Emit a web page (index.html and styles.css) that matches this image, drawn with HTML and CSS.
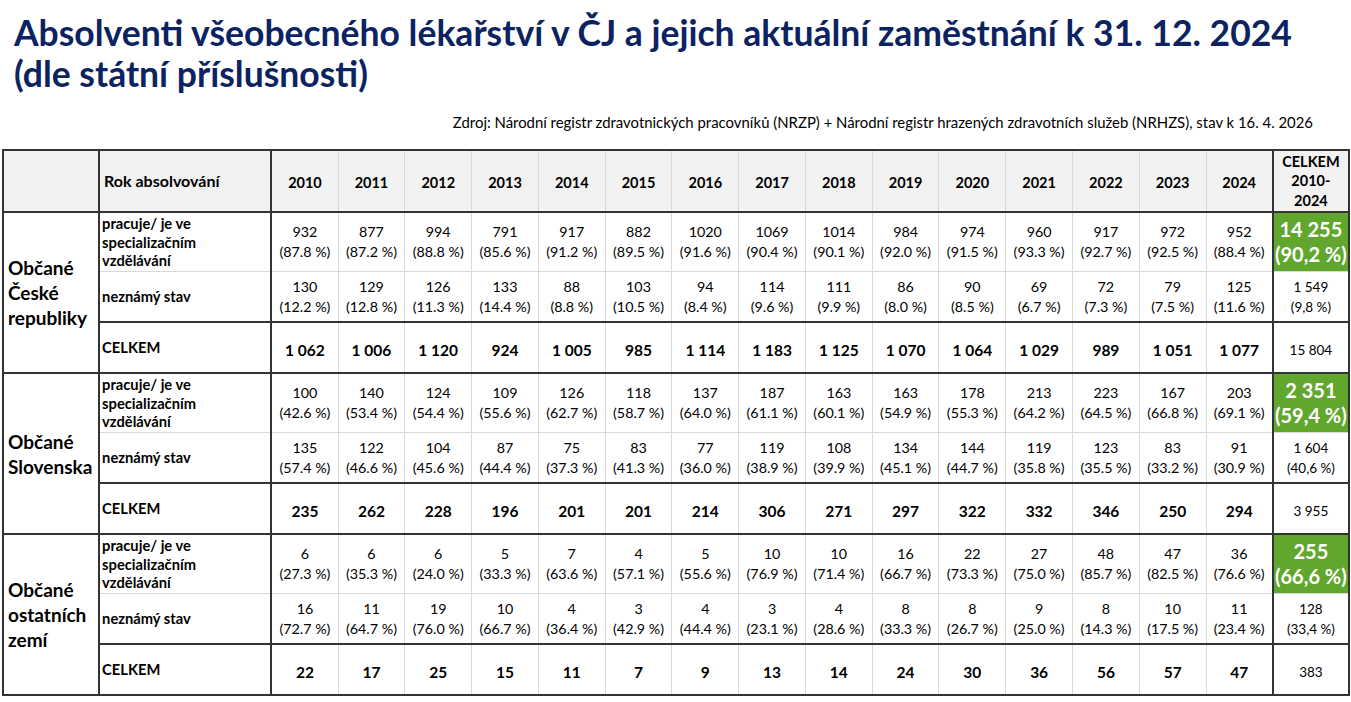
FILE: index.html
```html
<!DOCTYPE html>
<html lang="cs">
<head>
<meta charset="utf-8">
<title>Absolventi všeobecného lékařství</title>
<link rel="stylesheet" href="styles.css">
</head>
<body>
<h1 class="title">Absolventi všeobecného lékařství v ČJ a jejich aktuální zaměstnání k 31. 12. 2024<br>(dle státní příslušnosti)</h1>
<p class="source">Zdroj: Národní registr zdravotnických pracovníků (NRZP) + Národní registr hrazených zdravotních služeb (NRHZS), stav k 16. 4. 2026</p>
<table class="grid">
<colgroup>
<col class="c-grp"><col class="c-lab">
<col class="c-yr"><col class="c-yr"><col class="c-yr"><col class="c-yr"><col class="c-yr">
<col class="c-yr"><col class="c-yr"><col class="c-yr"><col class="c-yr"><col class="c-yr">
<col class="c-yr"><col class="c-yr"><col class="c-yr"><col class="c-yr"><col class="c-yr">
<col class="c-tot">
</colgroup>
<thead>
<tr class="hdr">
<th class="grp"></th><th class="lab">Rok absolvování</th>
<th>2010</th><th>2011</th><th>2012</th><th>2013</th><th>2014</th><th>2015</th><th>2016</th><th>2017</th><th>2018</th><th>2019</th><th>2020</th><th>2021</th><th>2022</th><th>2023</th><th>2024</th>
<th class="tot">CELKEM<br>2010-<br>2024</th>
</tr>
</thead>
<tbody>
<tr class="work">
<th class="grp" rowspan="3">Občané<br>České<br>republiky</th>
<th class="lab">pracuje/ je ve<br>specializačním<br>vzdělávání</th>
<td>932<br>(87.8 %)</td><td>877<br>(87.2 %)</td><td>994<br>(88.8 %)</td><td>791<br>(85.6 %)</td><td>917<br>(91.2 %)</td><td>882<br>(89.5 %)</td><td>1020<br>(91.6 %)</td><td>1069<br>(90.4 %)</td><td>1014<br>(90.1 %)</td><td>984<br>(92.0 %)</td><td>974<br>(91.5 %)</td><td>960<br>(93.3 %)</td><td>917<br>(92.7 %)</td><td>972<br>(92.5 %)</td><td>952<br>(88.4 %)</td>
<td class="tot green">14&nbsp;255<br>(90,2&nbsp;%)</td>
</tr>
<tr class="unk">
<th class="lab">neznámý stav</th>
<td>130<br>(12.2 %)</td><td>129<br>(12.8 %)</td><td>126<br>(11.3 %)</td><td>133<br>(14.4 %)</td><td>88<br>(8.8 %)</td><td>103<br>(10.5 %)</td><td>94<br>(8.4 %)</td><td>114<br>(9.6 %)</td><td>111<br>(9.9 %)</td><td>86<br>(8.0 %)</td><td>90<br>(8.5 %)</td><td>69<br>(6.7 %)</td><td>72<br>(7.3 %)</td><td>79<br>(7.5 %)</td><td>125<br>(11.6 %)</td>
<td class="tot small">1&nbsp;549<br>(9,8&nbsp;%)</td>
</tr>
<tr class="sum">
<th class="lab">CELKEM</th>
<td>1&nbsp;062</td><td>1&nbsp;006</td><td>1&nbsp;120</td><td>924</td><td>1&nbsp;005</td><td>985</td><td>1&nbsp;114</td><td>1&nbsp;183</td><td>1&nbsp;125</td><td>1&nbsp;070</td><td>1&nbsp;064</td><td>1&nbsp;029</td><td>989</td><td>1&nbsp;051</td><td>1&nbsp;077</td>
<td class="tot small">15&nbsp;804</td>
</tr>

<tr class="work">
<th class="grp" rowspan="3">Občané<br>Slovenska</th>
<th class="lab">pracuje/ je ve<br>specializačním<br>vzdělávání</th>
<td>100<br>(42.6 %)</td><td>140<br>(53.4 %)</td><td>124<br>(54.4 %)</td><td>109<br>(55.6 %)</td><td>126<br>(62.7 %)</td><td>118<br>(58.7 %)</td><td>137<br>(64.0 %)</td><td>187<br>(61.1 %)</td><td>163<br>(60.1 %)</td><td>163<br>(54.9 %)</td><td>178<br>(55.3 %)</td><td>213<br>(64.2 %)</td><td>223<br>(64.5 %)</td><td>167<br>(66.8 %)</td><td>203<br>(69.1 %)</td>
<td class="tot green">2&nbsp;351<br>(59,4&nbsp;%)</td>
</tr>
<tr class="unk">
<th class="lab">neznámý stav</th>
<td>135<br>(57.4 %)</td><td>122<br>(46.6 %)</td><td>104<br>(45.6 %)</td><td>87<br>(44.4 %)</td><td>75<br>(37.3 %)</td><td>83<br>(41.3 %)</td><td>77<br>(36.0 %)</td><td>119<br>(38.9 %)</td><td>108<br>(39.9 %)</td><td>134<br>(45.1 %)</td><td>144<br>(44.7 %)</td><td>119<br>(35.8 %)</td><td>123<br>(35.5 %)</td><td>83<br>(33.2 %)</td><td>91<br>(30.9 %)</td>
<td class="tot small">1&nbsp;604<br>(40,6&nbsp;%)</td>
</tr>
<tr class="sum">
<th class="lab">CELKEM</th>
<td>235</td><td>262</td><td>228</td><td>196</td><td>201</td><td>201</td><td>214</td><td>306</td><td>271</td><td>297</td><td>322</td><td>332</td><td>346</td><td>250</td><td>294</td>
<td class="tot small">3&nbsp;955</td>
</tr>

<tr class="work">
<th class="grp" rowspan="3">Občané<br>ostatních<br>zemí</th>
<th class="lab">pracuje/ je ve<br>specializačním<br>vzdělávání</th>
<td>6<br>(27.3 %)</td><td>6<br>(35.3 %)</td><td>6<br>(24.0 %)</td><td>5<br>(33.3 %)</td><td>7<br>(63.6 %)</td><td>4<br>(57.1 %)</td><td>5<br>(55.6 %)</td><td>10<br>(76.9 %)</td><td>10<br>(71.4 %)</td><td>16<br>(66.7 %)</td><td>22<br>(73.3 %)</td><td>27<br>(75.0 %)</td><td>48<br>(85.7 %)</td><td>47<br>(82.5 %)</td><td>36<br>(76.6 %)</td>
<td class="tot green">255<br>(66,6&nbsp;%)</td>
</tr>
<tr class="unk">
<th class="lab">neznámý stav</th>
<td>16<br>(72.7 %)</td><td>11<br>(64.7 %)</td><td>19<br>(76.0 %)</td><td>10<br>(66.7 %)</td><td>4<br>(36.4 %)</td><td>3<br>(42.9 %)</td><td>4<br>(44.4 %)</td><td>3<br>(23.1 %)</td><td>4<br>(28.6 %)</td><td>8<br>(33.3 %)</td><td>8<br>(26.7 %)</td><td>9<br>(25.0 %)</td><td>8<br>(14.3 %)</td><td>10<br>(17.5 %)</td><td>11<br>(23.4 %)</td>
<td class="tot small">128<br>(33,4&nbsp;%)</td>
</tr>
<tr class="sum last">
<th class="lab">CELKEM</th>
<td>22</td><td>17</td><td>25</td><td>15</td><td>11</td><td>7</td><td>9</td><td>13</td><td>14</td><td>24</td><td>30</td><td>36</td><td>56</td><td>57</td><td>47</td>
<td class="tot small">383</td>
</tr>
</tbody>
</table>
</body>
</html>
```
FILE: styles.css
```css
html, body {
  margin: 0;
  padding: 0;
  background: #ffffff;
}

body {
  font-family: Lato, "Liberation Sans", sans-serif;
  color: #000000;
}

.title {
  margin: 0;
  padding: 12px 0 0 14px;
  font-size: 35.5px;
  line-height: 41px;
  font-weight: 700;
  color: #0b2361;
}

.source {
  margin: 19px 0 0 0;
  padding-right: 38px;
  text-align: right;
  font-size: 14.9px;
  line-height: 18px;
}

.grid {
  margin: 18px 0 0 2px;
  width: 1348px;
  border-collapse: collapse;
  table-layout: fixed;
  border: 2px solid #333333;
}

.c-grp { width: 96px; }
.c-lab { width: 172px; }
.c-yr { width: 66.7px; }
.c-tot { width: 76px; }

.grid th,
.grid td {
  border: 1px solid #d9d9d9;
  padding: 0 1px;
  text-align: center;
  vertical-align: middle;
  white-space: nowrap;
}

.grid td {
  font-size: 14.3px;
  line-height: 20px;
  font-weight: 400;
}

/* header row */
.hdr th {
  background: #f2f2f2;
  height: 58px;
  font-size: 14.5px;
  font-weight: 700;
  border-bottom: 2px solid #333333;
  padding-top: 2px;
}

.hdr th.tot {
  line-height: 19.5px;
  padding-top: 0;
  height: 60px;
}

/* group label column */
.grid th.grp {
  border: 2px solid #333333;
  text-align: left;
  padding: 0 0 0 4px;
  font-size: 19px;
  line-height: 25px;
  font-weight: 700;
}

/* row label column */
.grid th.lab {
  border-left: 2px solid #333333;
  border-right: 2px solid #333333;
  text-align: left;
  padding: 0 0 0 2px;
  font-size: 14.7px;
  line-height: 18.5px;
  font-weight: 700;
}

.hdr th.lab {
  font-size: 16px;
  padding-left: 4px;
}

/* total column */
.grid .tot {
  border-left: 2px solid #333333;
  border-right: 2px solid #333333;
}

.grid td.small {
  font-size: 13.5px;
  line-height: 20px;
}

.grid td.green {
  background: #62a72d;
  color: #ffffff;
  font-size: 20px;
  line-height: 25px;
  font-weight: 700;
}

/* row heights */
.work th, .work td { height: 58px; }
.unk th, .unk td { height: 49px; }

.sum th, .sum td {
  height: 45px;
  padding-top: 4px;
  border-top: 2px solid #333333;
  border-bottom: 2px solid #333333;
}

.sum td {
  font-weight: 700;
  font-size: 15.5px;
}

.sum td.small {
  font-weight: 400;
  font-size: 13.5px;
}
```
